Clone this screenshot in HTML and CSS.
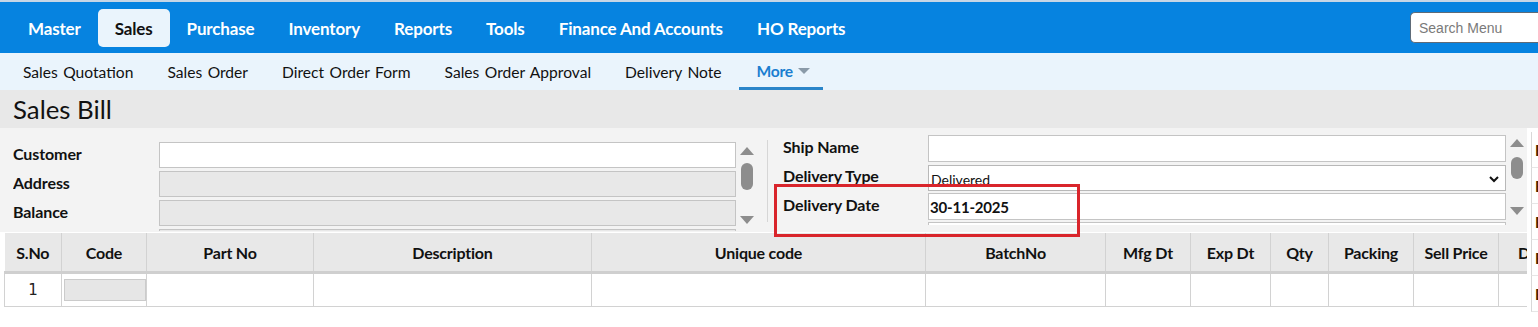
FILE: index.html
```html
<!doctype html>
<html lang="en">
    <head>
        <meta charset="utf-8">
        <title>Sales Bill</title>
        <link rel="stylesheet" href="styles.css">
    </head>
    <body>
        <header class="topbar">
            <nav class="menu">
                <a href="#">Master</a>
                <a href="#" class="active">Sales</a>
                <a href="#">Purchase</a>
                <a href="#">Inventory</a>
                <a href="#">Reports</a>
                <a href="#">Tools</a>
                <a href="#">Finance And Accounts</a>
                <a href="#">HO Reports</a>
            </nav>
            <input class="search" type="text" placeholder="Search Menu">
        </header>
        <nav class="submenu">
            <a href="#">Sales Quotation</a>
            <a href="#">Sales Order</a>
            <a href="#">Direct Order Form</a>
            <a href="#">Sales Order Approval</a>
            <a href="#">Delivery Note</a>
            <a href="#" class="more">More <span class="caret"></span></a>
        </nav>
        <div class="title">
            <h1>Sales Bill</h1>
        </div>
        <div class="workspace">
            <main class="main">
                <section class="form-panel">
                    <div class="group left">
                        <div class="fields">
                            <div class="row"><label>Customer</label><input type="text"></div>
                            <div class="row"><label>Address</label><input type="text" class="ro" readonly></div>
                            <div class="row"><label>Balance</label><input type="text" class="ro" readonly></div>
                            <div class="row"><label>Mobile</label><input type="text" class="ro" readonly></div>
                        </div>
                        <div class="scroll">
                            <span class="up"></span>
                            <span class="thumb"></span>
                            <span class="down"></span>
                        </div>
                    </div>
                    <div class="divider"></div>
                    <div class="group right">
                        <div class="fields">
                            <div class="row"><label>Ship Name</label><input type="text"></div>
                            <div class="row">
                                <label>Delivery Type</label>
                                <div class="select">
                                    <span>Delivered</span>
                                    <svg width="12" height="8" viewBox="0 0 12 8"><path d="M2 2l4 4 4-4" fill="none" stroke="#111" stroke-width="2"/></svg>
                                </div>
                            </div>
                            <div class="row"><label>Delivery Date</label><input type="text" class="date" value="30-11-2025"></div>
                            <div class="row"><label>Ship Address</label><input type="text"></div>
                        </div>
                        <div class="scroll">
                            <span class="up"></span>
                            <span class="thumb"></span>
                            <span class="down"></span>
                        </div>
                    </div>
                    <div class="highlight"></div>
                </section>
                <div class="grid-wrap">
                    <table class="grid">
                        <colgroup>
                            <col style="width:57px"><col style="width:85px"><col style="width:167px"><col style="width:278px">
                            <col style="width:334px"><col style="width:180px"><col style="width:85px"><col style="width:80px">
                            <col style="width:58px"><col style="width:85px"><col style="width:85px"><col style="width:80px">
                        </colgroup>
                        <thead>
                            <tr>
                                <th>S.No</th><th>Code</th><th>Part No</th><th>Description</th><th>Unique code</th><th>BatchNo</th>
                                <th>Mfg Dt</th><th>Exp Dt</th><th>Qty</th><th>Packing</th><th>Sell Price</th><th class="cut">Disc</th>
                            </tr>
                        </thead>
                        <tbody>
                            <tr>
                                <td class="sno">1</td><td class="code"><span class="cell-input"></span></td><td></td><td></td><td></td><td></td>
                                <td></td><td></td><td></td><td></td><td></td><td></td>
                            </tr>
                        </tbody>
                    </table>
                </div>
            </main>
            <aside class="side">
                <div class="side-item">Bill</div>
                <div class="side-item">Bill</div>
                <div class="side-item">Bill</div>
                <div class="side-item">Bill</div>
                <div class="side-item">Bill</div>
            </aside>
        </div>
    </body>
</html>
```

FILE: styles.css
```css
* {
    padding: 0;
    margin: 0;
    box-sizing: border-box;
    font-family: 'Lato', 'Open Sans', sans-serif;
}

body {
    background: #fff;
    color: #111;
    width: 1538px;
    overflow: hidden;
}

a {
    text-decoration: none;
}

/* top menu */
.topbar {
    display: flex;
    align-items: center;
    justify-content: space-between;
    height: 53px;
    background: #0683e0;
    border-top: 2px solid #c6d6e6;
    padding-left: 11px;
}

.menu {
    display: flex;
    align-self: stretch;
    padding-top: 7px;
    padding-bottom: 6px;
}

.menu a {
    display: flex;
    align-items: center;
    padding: 0 17px;
    color: #fff;
    font-size: 17px;
    font-weight: 700;
    letter-spacing: -0.15px;
    border-radius: 5px;
}

.menu a.active {
    background: #eaf4fc;
    color: #111;
}

.search {
    width: 130px;
    height: 31px;
    margin-right: -2px;
    padding: 0 8px;
    border: 1px solid #5e6b78;
    border-right: none;
    border-radius: 5px 0 0 5px;
    font-family: 'Liberation Sans', Arial, sans-serif;
    font-size: 14px;
    outline: none;
}

.search::placeholder {
    color: #7a7a7a;
}

/* sub menu */
.submenu {
    display: flex;
    height: 37px;
    background: #eaf4fc;
    padding-left: 6px;
}

.submenu a {
    display: flex;
    align-items: center;
    padding: 0 17px;
    color: #111;
    font-size: 15.6px;
    word-spacing: 1.5px;
}

.submenu a.more {
    padding: 2px 13px 0 18px;
    color: #1a7ed0;
    font-weight: 700;
    letter-spacing: -0.3px;
    word-spacing: 0;
    border-bottom: 3px solid #2a85c9;
}

.caret {
    display: inline-block;
    margin-left: 5px;
    border-left: 6px solid transparent;
    border-right: 6px solid transparent;
    border-top: 6px solid #8a9aa8;
}

.title {
    height: 38px;
    background: #e8e8e8;
    padding-left: 13px;
}

.title h1 {
    font-size: 25.8px;
    font-weight: 400;
    line-height: 38px;
    color: #111;
}

/* workspace */
.workspace {
    display: flex;
}

.main {
    width: 1527px;
    flex-shrink: 0;
}

.form-panel {
    position: relative;
    display: flex;
    height: 104px;
    background: #f3f3f3;
}

.group {
    display: flex;
}

.group.left {
    margin-left: 13px;
    margin-top: 14px;
    height: 89px;
}

.group.right {
    margin-left: 15px;
    margin-top: 7px;
    height: 96px;
}

.fields {
    overflow: hidden;
}

.right .fields {
    height: 90px;
}

.row {
    display: flex;
    align-items: center;
    margin-bottom: 2px;
}

.left .row {
    margin-bottom: 3px;
}

.row label {
    font-size: 16px;
    font-weight: 700;
    color: #111;
    letter-spacing: -0.1px;
    line-height: 1;
    padding-bottom: 2px;
}

.left .row label {
    width: 146px;
}

.right .row label {
    width: 145px;
    padding-bottom: 3px;
}

.row input,
.select {
    height: 26px;
    border: 1px solid #c4c4c4;
    background: #fff;
    font-size: 15px;
    padding: 0 1px;
    outline: none;
}

.left .row input {
    width: 577px;
}

.right .row input,
.right .select {
    width: 578px;
    height: 27px;
}

.row input.ro {
    background: #e8e8e8;
}

.row input.date {
    font-weight: 700;
    color: #111;
    letter-spacing: -0.2px;
}

.select {
    display: flex;
    align-items: center;
    justify-content: space-between;
    padding: 2px 5px 0 2px;
    border-color: #b8b8b8;
    font-size: 14px;
}

.right .select {
    height: 26px;
    margin-top: 1px;
}

/* fake scrollbars */
.scroll {
    display: flex;
    flex-direction: column;
    align-items: center;
    width: 15px;
}

.left .scroll {
    margin-left: 3px;
}

.right .scroll {
    margin-left: 3px;
    height: 87px;
}

.scroll .up,
.scroll .down {
    width: 0;
    border-left: 7px solid transparent;
    border-right: 7px solid transparent;
}

.scroll .up {
    margin-top: 5px;
    border-bottom: 8px solid #8d8d8d;
}

.scroll .down {
    margin-top: auto;
    margin-bottom: 7px;
    border-top: 8px solid #8d8d8d;
}

.scroll .thumb {
    width: 12px;
    height: 27px;
    margin-top: 8px;
    border-radius: 6px;
    background: #8d8d8d;
}

.right .scroll .up {
    margin-top: 4px;
}

.right .scroll .thumb {
    height: 22px;
    margin-top: 10px;
}

.divider {
    width: 1px;
    height: 82px;
    margin: 12px 0 0 13px;
    background: #d6d6d6;
}

.highlight {
    position: absolute;
    left: 774px;
    top: 56px;
    width: 306px;
    height: 53px;
    border: 3px solid #d9252b;
    z-index: 2;
}

/* line grid */
.grid-wrap {
    margin-left: 4px;
    overflow: hidden;
    border-top: 1px solid #fff;
}

.grid {
    border-collapse: collapse;
    table-layout: fixed;
    width: 1574px;
}

.grid th {
    height: 39px;
    background: #e8e8e8;
    border-right: 1px solid #d2d2d2;
    border-bottom: 3px solid #cfcfcf;
    font-size: 16px;
    font-weight: 700;
    letter-spacing: -0.2px;
    color: #111;
    text-align: center;
    padding-top: 1px;
    white-space: nowrap;
}

.grid th.cut {
    text-align: left;
    padding-left: 19px;
}

.grid td {
    height: 34px;
    border: 1px solid #d2d2d2;
    background: #fff;
}

.grid td.sno {
    text-align: center;
    font-family: 'DejaVu Sans', sans-serif;
    font-size: 15px;
    color: #222;
}

.grid td.code {
    padding: 0 0 0 2px;
}

.cell-input {
    display: block;
    height: 22px;
    background: #e6e6e6;
    border: 1px solid #cbcbcb;
}

/* side list */
.side {
    flex: 1;
    overflow: hidden;
    padding-top: 4px;
    padding-left: 4px;
}

.side-item {
    height: 36px;
    border-left: 1px solid #d8d8d8;
    border-bottom: 1px solid #e6e6e6;
    padding-left: 3px;
    line-height: 36px;
    font-size: 15px;
    font-weight: 700;
    color: #4a1e00;
    white-space: nowrap;
}
```
